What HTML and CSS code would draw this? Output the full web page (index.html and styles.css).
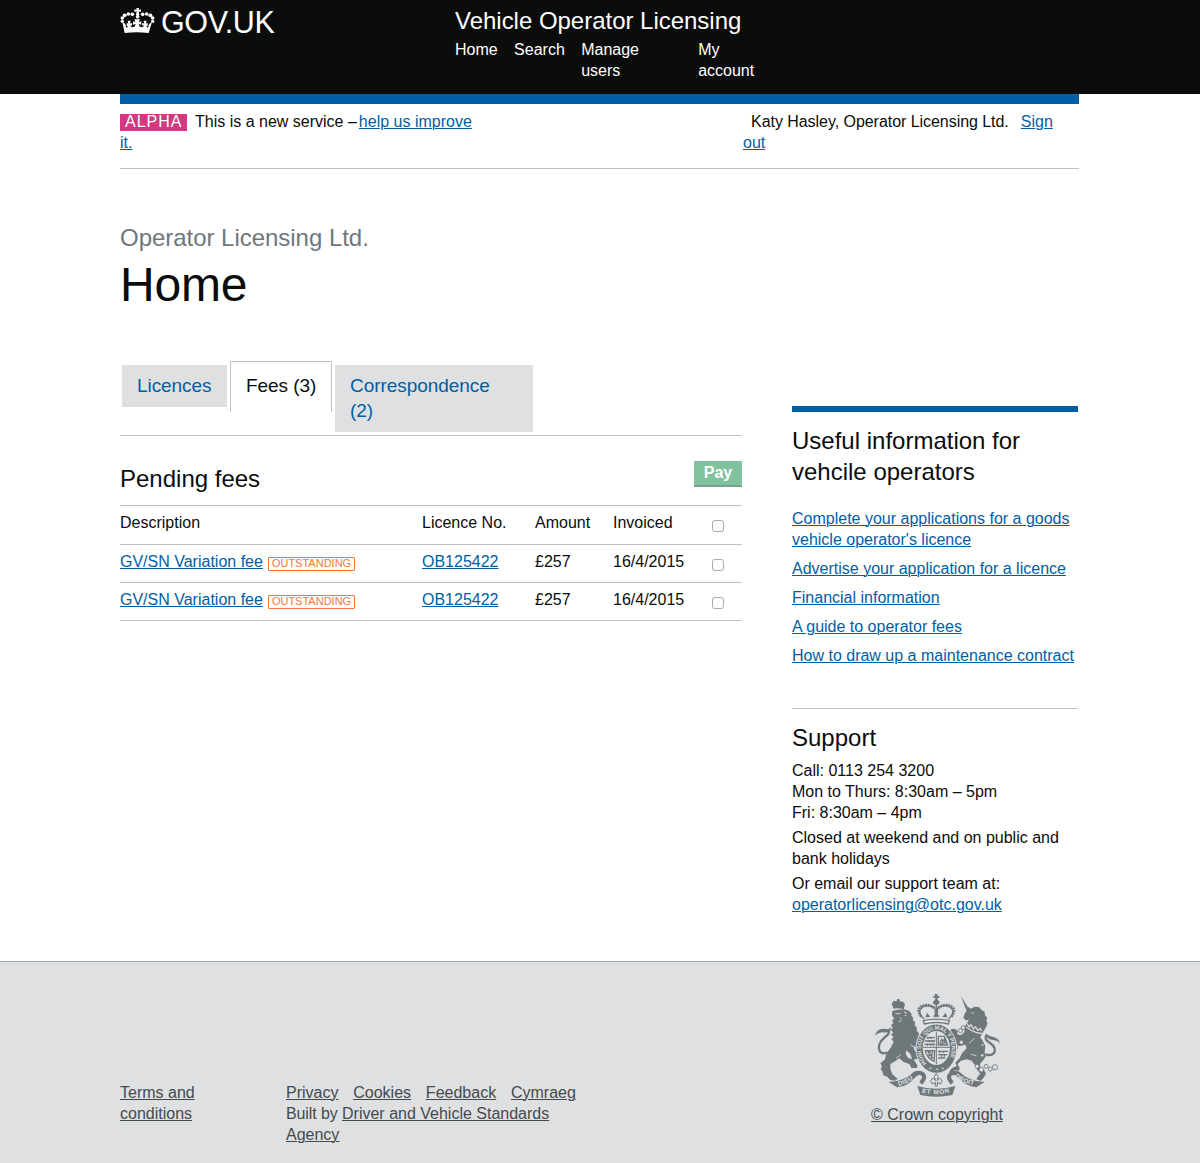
FILE: index.html
```html
<!DOCTYPE html>
<html lang="en">
<head>
<meta charset="utf-8">
<title>Vehicle Operator Licensing</title>
<link rel="stylesheet" href="styles.css">
</head>
<body>
<header class="site-header">
  <div class="container header-row">
    <a class="logo" href="#">
      <svg class="crown" viewBox="30 21 105 81" aria-hidden="true">
        <path d="M79 24h8l-1 6 7-2v8l-7-2 2 11h-10l2-11-7 2v-8l7 2z"/>
        <circle cx="67" cy="43" r="5.5"/><circle cx="55" cy="42" r="5.5"/><circle cx="44" cy="46" r="5.8"/><circle cx="37" cy="54" r="5.5"/><circle cx="37" cy="64" r="5"/>
        <circle cx="98" cy="43" r="5.5"/><circle cx="110" cy="42" r="5.5"/><circle cx="121" cy="46" r="5.8"/><circle cx="128" cy="54" r="5.5"/><circle cx="128" cy="64" r="5"/>
        <circle cx="83" cy="50" r="5.5"/>
        <path d="M37 66l9 6 3 12 5-5-4-2v-9l5 3-2-9h9l-2 9 6-3v9l-6-1 5 6 9-2 3-8-8 2v-10l7 3-3-9h17l-4 9 8-3v10l-8-2 3 8 9 2 5-6-6 1v-9l6 3-2-9h9l-2 9 5-3v9l-4 2 5 5 3-12 9-6-10 33q-37-5-72 0z"/>
      </svg>
      <span class="logo-text">GOV.UK</span>
    </a>
    <div class="header-main">
      <div class="service-name">Vehicle Operator Licensing</div>
      <nav class="main-nav">
        <a href="#">Home</a>
        <a href="#">Search</a>
        <a class="nav-users" href="#">Manage users</a>
        <a class="nav-account" href="#">My account</a>
      </nav>
    </div>
  </div>
</header>
<div class="container">
  <div class="header-bar"></div>
  <div class="phase-banner">
    <div class="phase-message"><strong class="phase-tag">ALPHA</strong><span class="phase-text">This is a new service –</span><a href="#">help us improve it.</a></div>
    <div class="user-info"><span class="user-name">Katy Hasley, Operator Licensing Ltd.</span><a href="#">Sign out</a></div>
  </div>
  <div class="page-title">
    <p class="caption">Operator Licensing Ltd.</p>
    <h1>Home</h1>
  </div>
  <div class="columns">
    <main>
      <div class="tabs">
        <a class="tab" href="#">Licences</a>
        <a class="tab tab-current" href="#">Fees (3)</a>
        <a class="tab tab-wide" href="#">Correspondence (2)</a>
      </div>
      <div class="table-head">
        <h2>Pending fees</h2>
        <button class="pay">Pay</button>
      </div>
      <div class="fees">
        <div class="fee-row fee-header"><span>Description</span><span>Licence No.</span><span>Amount</span><span>Invoiced</span><input type="checkbox"></div>
        <div class="fee-row"><span><a href="#">GV/SN Variation fee</a><span class="status">OUTSTANDING</span></span><span><a href="#">OB125422</a></span><span>£257</span><span>16/4/2015</span><input type="checkbox"></div>
        <div class="fee-row"><span><a href="#">GV/SN Variation fee</a><span class="status">OUTSTANDING</span></span><span><a href="#">OB125422</a></span><span>£257</span><span>16/4/2015</span><input type="checkbox"></div>
      </div>
    </main>
    <aside>
      <section class="useful">
        <h2>Useful information for vehcile operators</h2>
        <ul>
          <li><a href="#">Complete your applications for a goods vehicle operator's licence</a></li>
          <li><a href="#">Advertise your application for a licence</a></li>
          <li><a href="#">Financial information</a></li>
          <li><a href="#">A guide to operator fees</a></li>
          <li><a href="#">How to draw up a maintenance contract</a></li>
        </ul>
      </section>
      <section class="support">
        <h2>Support</h2>
        <p>Call: 0113 254 3200<br>Mon to Thurs: 8:30am – 5pm<br>Fri: 8:30am – 4pm</p>
        <p>Closed at weekend and on public and bank holidays</p>
        <p>Or email our support team at: <a href="#">operatorlicensing@otc.gov.uk</a></p>
      </section>
    </aside>
  </div>
</div>
<footer>
  <div class="container footer-row">
    <a class="terms" href="#">Terms and conditions</a>
    <div class="footer-links">
      <div class="footer-nav"><a href="#">Privacy</a><a href="#">Cookies</a><a href="#">Feedback</a><a href="#">Cymraeg</a></div>
      <div class="built"><span class="built-by">Built by </span><a href="#">Driver and Vehicle Standards Agency</a></div>
    </div>
    <div class="copyright">
      <svg class="crest" viewBox="39 39 384 312" aria-hidden="true">
        <defs>
          <path id="garter" d="M200 250A46 57 0 1 1 258 250"/>
          <path id="dieu" d="M116 318Q142 312 167 291"/>
          <path id="etmon" d="M185 338Q229 348 273 336"/>
          <path id="droit" d="M284 290Q311 312 350 317"/>
        </defs>
        <g class="ink">
          <path d="M101 86L95 72L100 63L110 64L112 57H118L120 64L129 65L135 73L131 88Q116 82 101 86Z"/>
          <path d="M97 93L112 89L132 88L147 92L155 102L154 108L160 113L158 120L166 127L164 135L171 144L170 152L177 160L176 169L188 184L181 201L170 204L160 196L163 210L175 221L173 236L157 240L151 222L139 211L137 222L144 233L162 240L172 256L171 264H154L148 252L131 246L118 235L103 245L91 252L91 266L97 283L113 296L105 302L91 300L81 290L70 286L67 274L62 267L66 259L61 250L74 239L80 220L93 202L101 185L94 178L101 171L93 164L100 157L92 150L99 143L93 135L100 130L96 121L103 116L96 106Z"/>
          <path d="M45 168Q48 149 67 146L85 148L95 140L90 153Q78 159 68 157Q55 157 45 168ZM420 189Q415 174 400 171L388 167L376 160L380 172Q389 181 399 180Q410 180 420 189Z"/>
          <path d="M302 47L327 87L320 93Z"/>
          <path d="M310 113L314 101L321 91L323 80L333 86L344 80L358 82L362 88L374 96L375 106L382 113L379 122L383 131L376 145L367 160L361 172L369 184L376 199L374 216L378 229L370 240L360 251L361 261L371 268L378 281L372 292L362 303L349 298L354 289L361 281L352 270L343 253L335 242L320 238L303 242L293 252L299 264L297 272L284 271L271 280L268 275L275 265L290 258L286 248L299 234L307 218L320 205L316 194L300 198L291 196L294 204L286 214L280 205L277 190L285 185L279 173L274 160L272 148L284 146L293 152L292 163L302 166L313 157L314 143L318 133L327 120L317 121Z"/>
        </g>
        <g class="tail">
          <path d="M84 150Q92 160 74 172Q48 194 60 215Q69 224 82 217"/>
          <path d="M379 166Q371 178 390 189Q412 204 401 220Q392 229 377 223"/>
        </g>
        <g class="cut">
          <path d="M106 99L114 102L122 99M132 96L141 99M119 112L125 118M134 105L141 108M116 125L124 122"/>
          <path d="M151 194L159 199M122 224L108 235M335 98L342 100M343 175L327 190M349 227L333 223"/>
          <path class="collar" d="M321 130L328 141L333 134L341 147L347 140L353 151L361 146L365 153M319 141L333 151L348 157L366 161"/>
        </g>
        <g class="rings"><circle cx="301" cy="152" r="6"/><circle cx="309" cy="143" r="6"/><circle cx="304" cy="187" r="6"/><circle cx="368" cy="195" r="4"/><circle cx="367" cy="226" r="5"/><circle cx="351" cy="259" r="6"/><circle cx="364" cy="269" r="7"/><circle cx="378" cy="259" r="6"/><circle cx="391" cy="267" r="6"/><circle cx="405" cy="262" r="8"/></g>
        <g class="line">
          <path d="M193 117Q173 102 182 87C191 75 213 75 225 84L227 111M265 117Q285 102 276 87C267 75 245 75 233 84L231 111M190 122Q229 113 268 122L265 132Q229 123 193 132Z"/>
        </g>
        <path class="ink" d="M196 112L201 98L211 111ZM219 110L229 96L239 110ZM247 111L257 98L262 112ZM224 42H233L232 48L238 47V54L232 53L233 60Q240 63 239 69Q236 75 229 75Q222 75 219 69Q218 63 225 60L226 53L220 54V47L225 48ZM227 73H231V107H227Z"/>
        <g class="beads"><path d="M184 110Q168 87 184 79Q204 69 224 85M274 110Q290 87 274 79Q254 69 234 85"/></g>
        <ellipse class="garter" cx="229" cy="206" rx="61" ry="74"/>
        <ellipse class="shield" cx="229" cy="204" rx="41" ry="51"/>
        <g class="quarters">
          <path class="frame" d="M229 155V253M188 202H270"/>
          <path d="M200 173H225M194 183H225M193 193H225M234 214H265M234 224H262M234 234H256M204 170V177M213 170V177M208 180V187M218 180V187M202 190V197M212 190V197M220 190V197M240 212V219M251 212V219M244 223V230M253 223V230"/>
          <path d="M235 169H253L263 195H235ZM240 189L245 178L248 185L253 177L256 189L249 188L246 194Z"/>
          <path d="M196 212Q201 235 222 244L224 212ZM203 213L219 236M211 213L206 230M218 213L213 236"/>
        </g>
        <g class="ink">
          <path d="M86 306Q134 304 162 275Q181 269 193 278Q201 286 197 299L187 314L178 306L186 293Q187 284 176 285Q169 287 163 295Q144 319 111 322ZM374 306Q326 304 298 275Q279 269 267 278Q258 286 262 299L272 314L281 306L273 293Q273 284 283 285Q291 287 298 295Q316 318 349 322Z"/>
          <path d="M172 318Q229 335 286 318L277 345Q229 356 181 345Z"/>
        </g>
        <path class="fleur" d="M226 318V307L217 312L212 302L219 294L227 302L223 290L229 281L235 290L231 302L239 294L246 302L241 312L232 307V318Z"/>
        <g class="motto">
          <text class="motto-garter"><textPath href="#garter" textLength="237">HONI SOIT QUI MAL Y PENSE</textPath></text>
          <text><textPath href="#dieu" textLength="49">DIEU</textPath></text>
          <text><textPath href="#etmon" textLength="84">ET MON</textPath></text>
          <text><textPath href="#droit" textLength="63">DROIT</textPath></text>
        </g>
        <g class="cut"><circle cx="211" cy="265" r="2"/><circle cx="231" cy="268" r="2"/><circle cx="248" cy="265" r="2"/></g>
      </svg>
      <a href="#">© Crown copyright</a>
    </div>
  </div>
</footer>
</body>
</html>
```
FILE: styles.css
```css
* { box-sizing: border-box; }
body {
  margin: 0;
  background: #fff;
  color: #0b0c0c;
  font: 16px/21px "Liberation Sans", Arial, sans-serif;
}
a { color: #005ea5; text-underline-offset: 1px; text-decoration-thickness: 1px; }
h1, h2, p, ul { margin: 0; padding: 0; font-weight: normal; }
h2 { font-size: 24px; line-height: 31px; }
ul { list-style: none; }
.container { width: 959px; margin-left: 120px; }

.site-header { height: 94px; background: #0b0c0c; color: #fff; }
.header-row { display: flex; }
.site-header a { color: #fff; text-decoration: none; }
.logo { display: flex; width: 335px; padding-top: 7px; }
.crown { width: 35px; height: 27px; fill: #fff; }
.logo-text { margin-left: 6px; font-size: 30.5px; line-height: 30px; letter-spacing: -0.4px; }
.header-main { padding-top: 6px; }
.service-name { font-size: 24px; line-height: 30px; letter-spacing: -0.02px; }
.main-nav { display: flex; gap: 16.4px; padding-top: 3px; }
.nav-users { width: 100.6px; padding-right: 35px; }
.nav-account { width: 60px; }

.header-bar { height: 10px; background: #005ea5; }
.phase-banner { display: flex; justify-content: space-between; height: 65px; padding-top: 7px; border-bottom: 1px solid #bfc1c3; }
.phase-message { width: 360px; }
.phase-tag { display: inline-block; width: 67px; height: 17px; padding-left: 5px; background: #d53880; color: #fff; font-weight: normal; line-height: 16px; letter-spacing: 1px; }
.phase-text { margin: 0 2px 0 8px; }
.user-info { width: 336px; }
.user-name { margin: 0 12px 0 8px; letter-spacing: -0.045px; }

.page-title { padding-top: 53px; }
.caption { color: #6f777b; font-size: 24px; line-height: 32px; letter-spacing: -0.03px; }
h1 { padding-top: 1px; font-size: 48px; line-height: 59px; letter-spacing: -0.2px; }

.columns { display: flex; justify-content: space-between; padding-top: 47px; }
main { width: 622px; }
.tabs { display: flex; align-items: flex-start; gap: 3px; height: 75px; padding: 4px 0 0 2px; border-bottom: 1px solid #bfc1c3; font-size: 19px; line-height: 25px; letter-spacing: -0.06px; }
.tab { width: 105px; padding: 8px 15px 9px; background: #dee0e2; text-decoration: none; }
.tab-current { width: 102px; height: 51px; margin-top: -4px; padding-top: 11px; border: 1px solid #bfc1c3; border-bottom: 0; background: #fff; color: #0b0c0c; white-space: nowrap; }
.tab-wide { width: 198px; padding-right: 30px; }
.table-head { display: flex; justify-content: space-between; height: 69px; padding-top: 25px; }
.table-head h2 { padding-top: 2px; }
.pay { width: 48px; height: 26px; padding: 0 0 1px; border: 0; border-bottom: 2px solid #74a588; background: #80c29d; color: #fff; font: bold 16px/20px "Liberation Sans", Arial, sans-serif; }
.fees { border-top: 1px solid #bfc1c3; }
.fee-row { display: grid; grid-template-columns: 302px 113px 78px 99px 12px; align-items: start; height: 38px; padding-top: 6px; border-bottom: 1px solid #bfc1c3; }
.fee-header { height: 39px; }
.fee-row input { appearance: none; width: 12px; height: 12px; margin: 8px 0 0; border: 1px solid #a9a9a9; border-radius: 3px; background: #fff; }
.status { display: inline-block; height: 14px; margin-left: 5px; padding: 0 3px; border: 1px solid #f47738; border-radius: 1px; color: #f47738; font-size: 11px; line-height: 11px; vertical-align: 0; }

aside { width: 286px; margin: 45px 1px 0 0; }
.useful { height: 302px; padding-top: 13px; border-top: 6px solid #005ea5; }
.useful ul { display: flex; flex-direction: column; gap: 8px; padding-top: 21px; }
.support { height: 253px; padding-top: 13px; border-top: 1px solid #bfc1c3; }
.support h2 { margin-bottom: 7px; }
.support p { margin-bottom: 4px; }

footer { height: 202px; border-top: 1px solid #a1acb2; background: #dee0e2; color: #454a4c; }
footer a { color: #454a4c; }
.footer-row { display: flex; }
.terms { width: 110px; margin-top: 120px; }
.footer-links { width: 300px; margin: 120px 0 0 56px; }
.footer-nav { display: flex; gap: 14.8px; }
.built-by { letter-spacing: -0.1px; }
.copyright { display: flex; flex-direction: column; align-items: center; width: 134px; margin: 31px 0 0 284px; white-space: nowrap; }
.crest { width: 128px; height: 104px; margin-bottom: 7px; }

.crest .ink { fill: #6f777b; }
.crest .line { fill: none; stroke: #6f777b; stroke-width: 4; }
.crest .tail { fill: none; stroke: #6f777b; stroke-width: 7; }
.crest .cut { fill: none; stroke: #dee0e2; stroke-width: 2.5; }
.crest .cut .collar { stroke-width: 3.5; }
.crest .rings { fill: #dee0e2; stroke: #6f777b; stroke-width: 2.5; }
.crest .beads { fill: none; stroke: #6f777b; stroke-width: 8; stroke-dasharray: 6 2; }
.crest .garter { fill: #6f777b; stroke: #dee0e2; stroke-width: 3; }
.crest .shield { fill: #dee0e2; }
.crest .quarters { fill: none; stroke: #6f777b; stroke-width: 4; }
.crest .quarters .frame { stroke-width: 3; }
.crest .fleur { fill: none; stroke: #6f777b; stroke-width: 3; }
.motto { fill: #dee0e2; font: bold 19px "Liberation Sans", Arial, sans-serif; }
.motto-garter { font-size: 17px; }
```
